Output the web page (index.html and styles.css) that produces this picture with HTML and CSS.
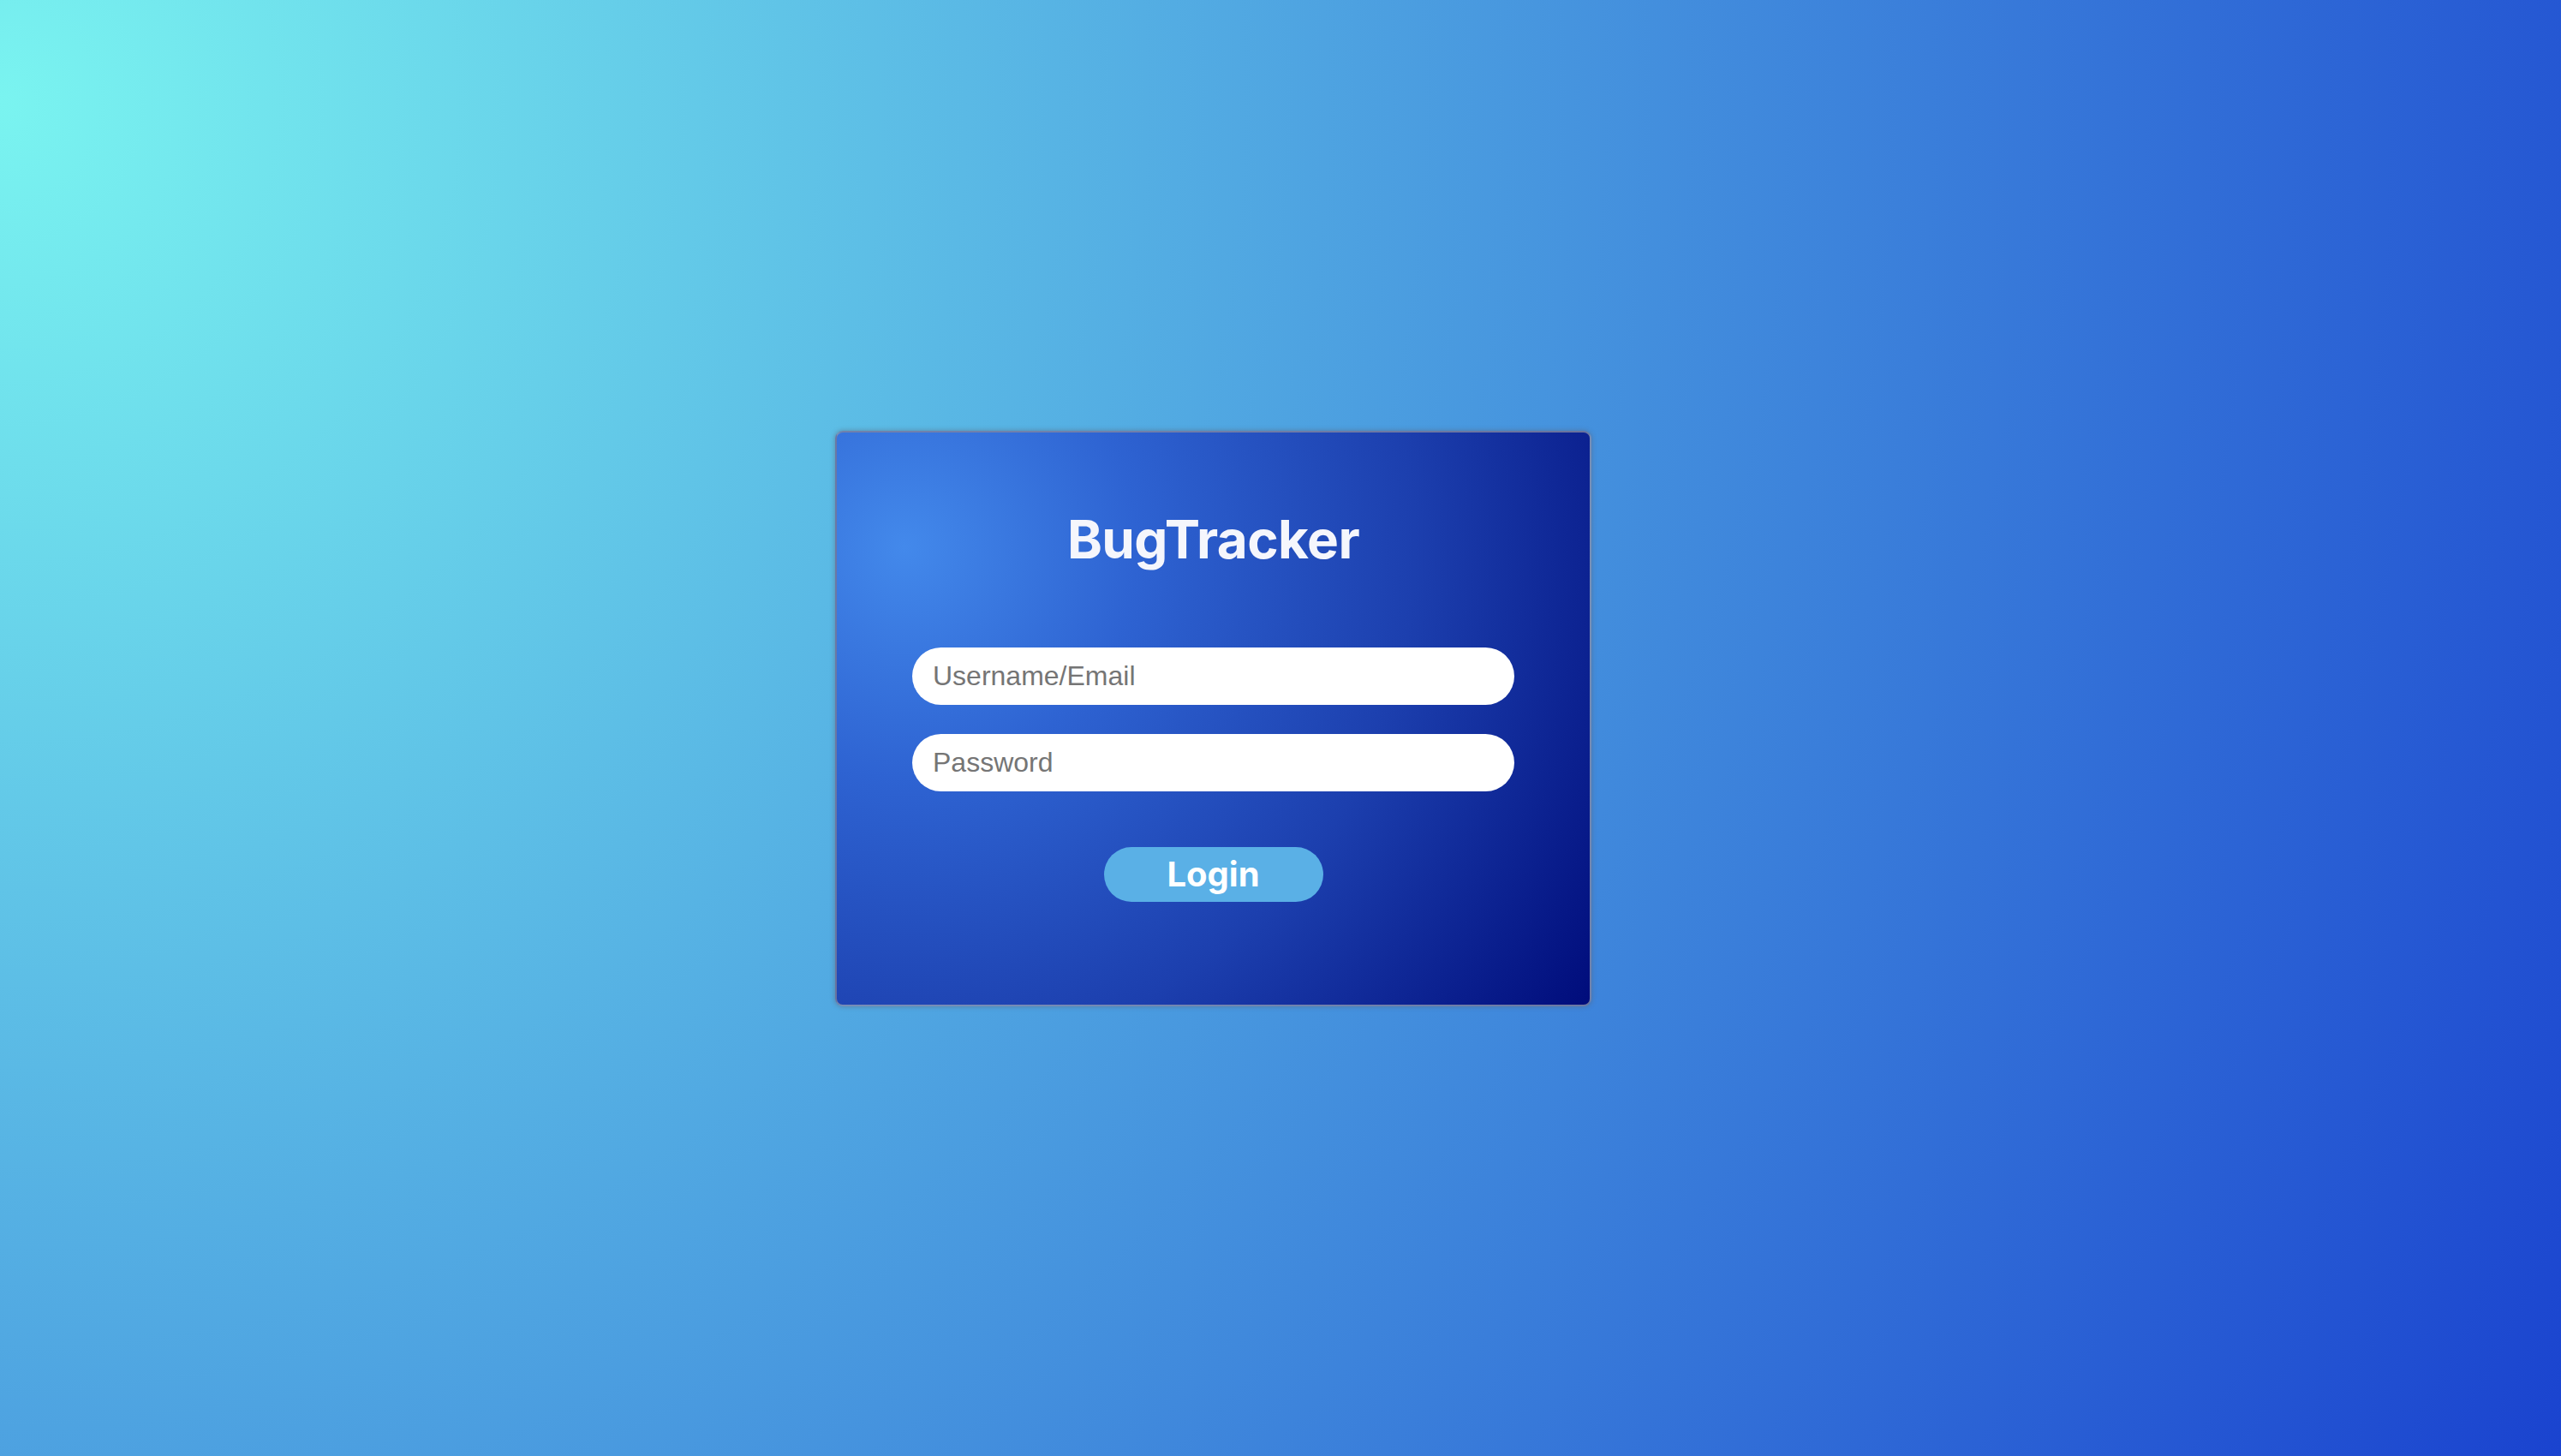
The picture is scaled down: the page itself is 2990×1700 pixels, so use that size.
FILE: index.html
```html
<!DOCTYPE html>
<html lang="en">
<head>
<meta charset="utf-8">
<title>BugTracker - Login</title>
<link rel="stylesheet" href="styles.css">
</head>
<body>
<main class="page">
  <form class="card">
    <h1 class="title">BugTracker</h1>
    <div class="fields">
      <input class="field" type="text" placeholder="Username/Email">
      <input class="field" type="password" placeholder="Password">
    </div>
    <button class="login" type="button">Login</button>
  </form>
</main>
</body>
</html>
```

FILE: styles.css
```css
* { box-sizing: border-box; }

html, body {
  margin: 0;
  padding: 0;
  height: 100%;
}

body {
  background: radial-gradient(circle farthest-corner at 0 7%, #7af4f0 0%, #1a43cf 100%);
  font-family: "Liberation Sans", Arial, sans-serif;
}

.page {
  min-height: 1700px;
  display: flex;
  justify-content: center;
  align-items: center;
  padding: 0 157px 22px 0;
}

.card {
  width: 883px;
  height: 672px;
  border-radius: 9px;
  border: 2px solid rgba(140, 150, 170, 0.75);
  box-shadow: 0 0 5px 1px rgba(90, 100, 120, 0.45);
  background: radial-gradient(circle farthest-corner at 9% 20%, #4389eb 0%, #2e63d2 28%, #1c3fae 62%, #000c7b 100%);
  padding: 87px 88px 0;
  display: flex;
  flex-direction: column;
  align-items: center;
}

.title {
  margin: 0;
  font-family: Inter, "Liberation Sans", sans-serif;
  font-weight: 700;
  font-size: 62px;
  line-height: 75px;
  color: #f5f6fc;
  letter-spacing: -0.6px;
}

.fields {
  width: 100%;
  margin-top: 89px;
  display: flex;
  flex-direction: column;
  gap: 34px;
}

.field {
  width: 100%;
  height: 67px;
  border: none;
  outline: none;
  border-radius: 34px;
  background: #ffffff;
  padding: 0 24px;
  font-family: "Liberation Sans", Arial, sans-serif;
  font-size: 32px;
  color: #333;
}

.field::placeholder {
  color: #757575;
}

.login {
  margin-top: 65px;
  width: 256px;
  height: 64px;
  border: none;
  border-radius: 32px;
  background: #5ab0e6;
  color: #ffffff;
  font-family: Inter, "Liberation Sans", sans-serif;
  font-weight: 700;
  font-size: 40px;
  line-height: 64px;
  padding: 0;
}
```
